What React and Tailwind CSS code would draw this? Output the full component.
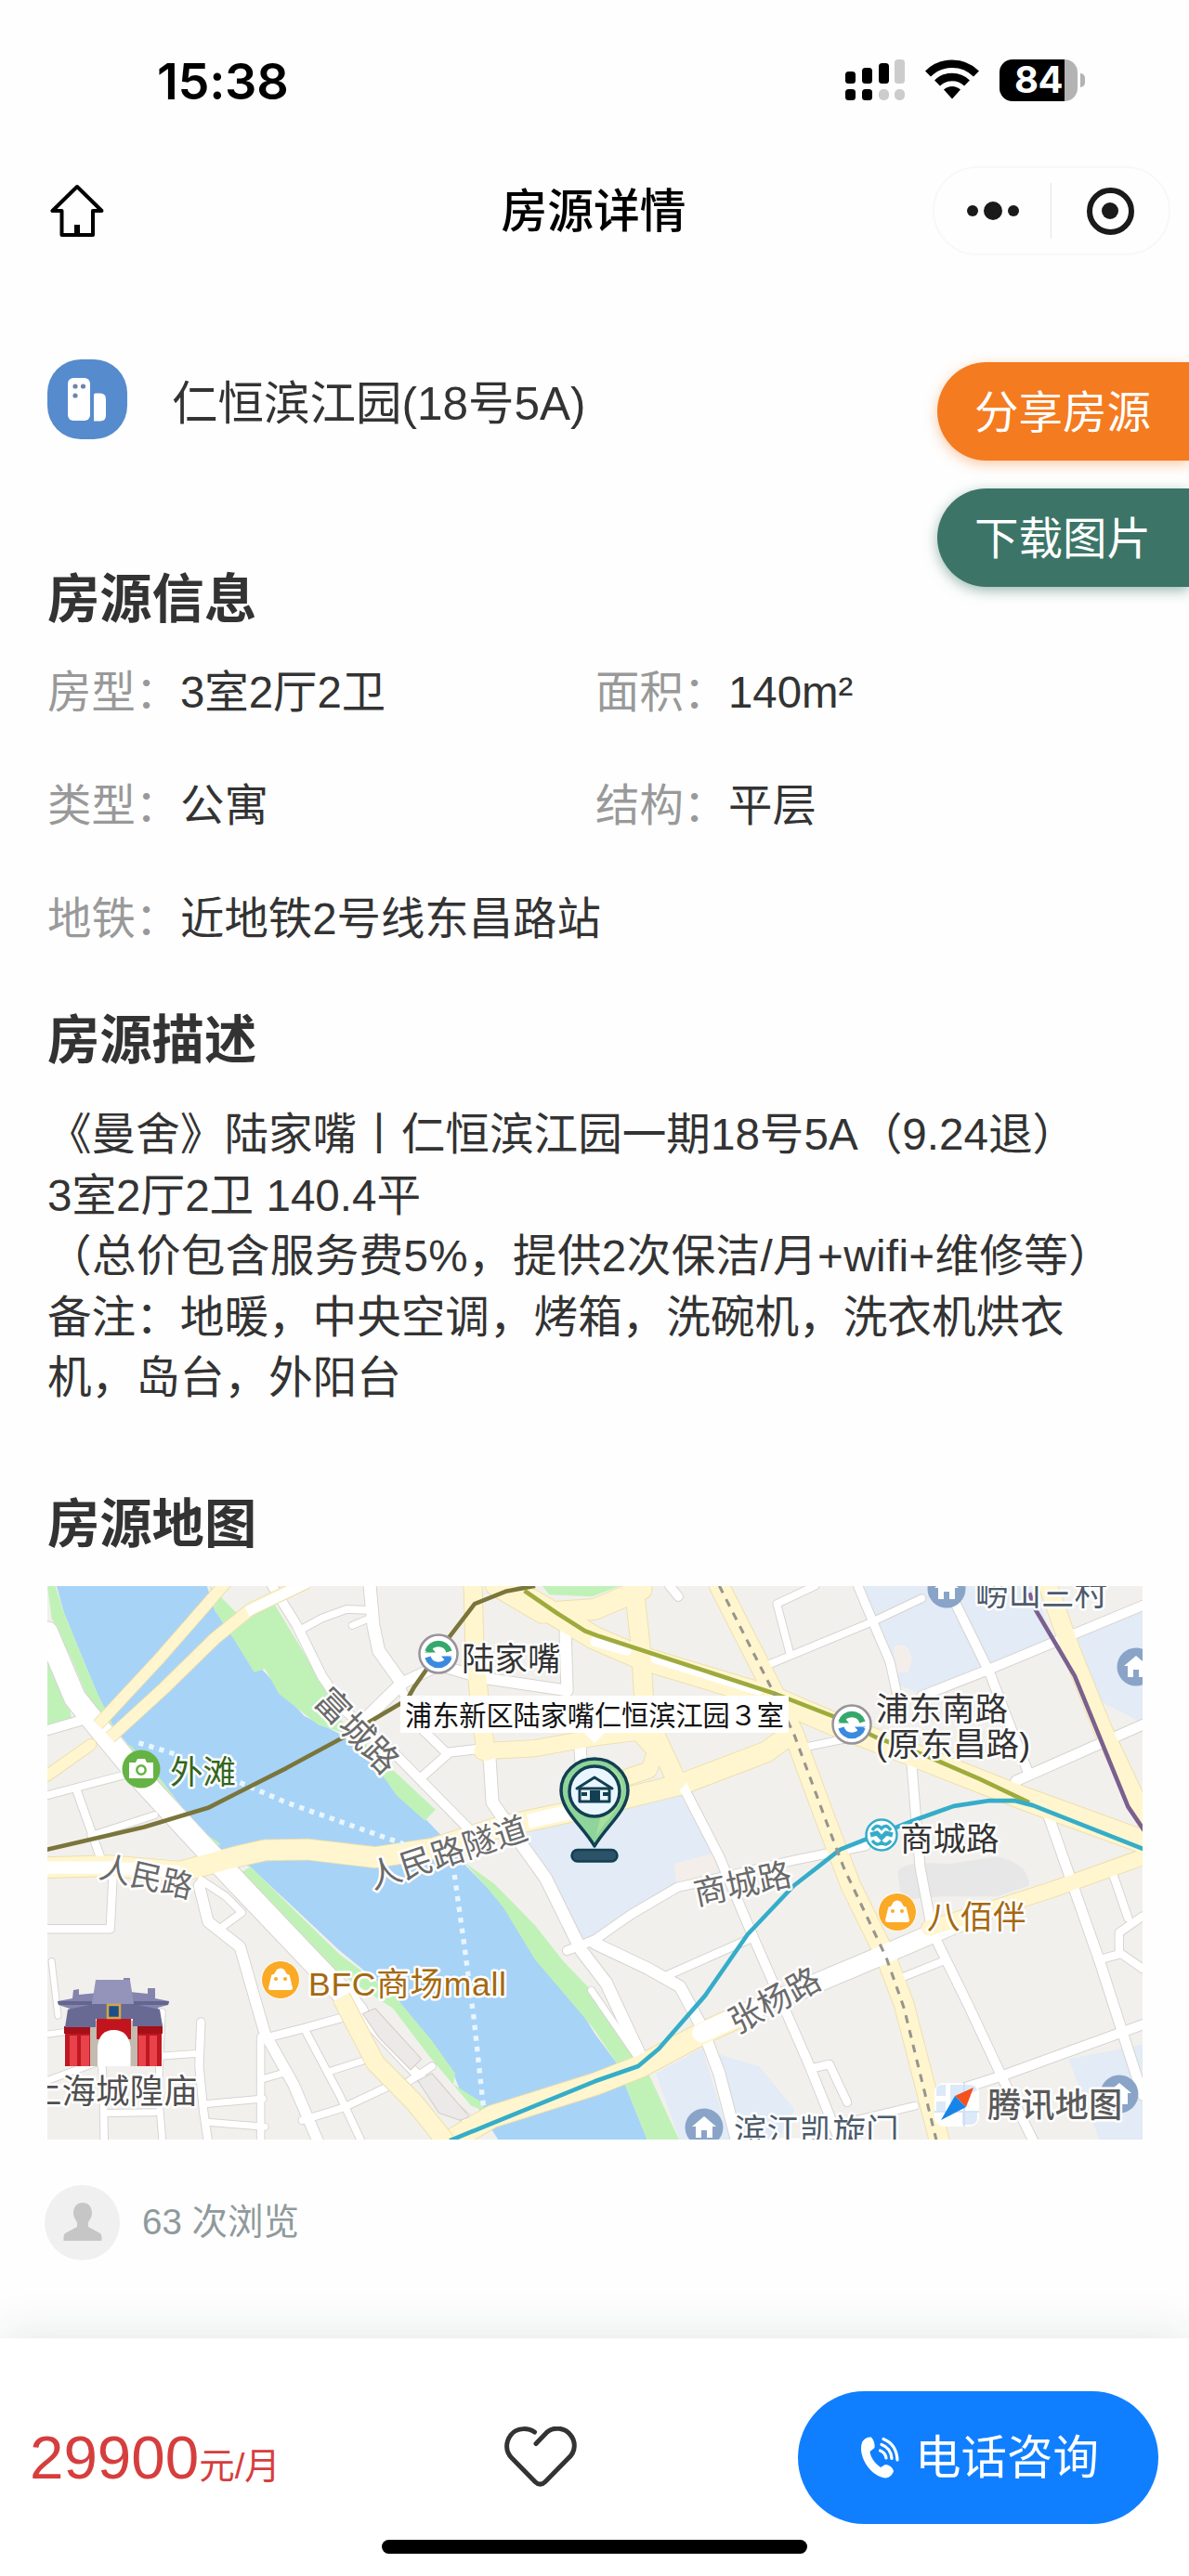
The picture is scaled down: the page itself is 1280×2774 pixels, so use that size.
import React from "react";

/* ---------- map geometry ---------- */

const W = "#ffffff";
const Y = "#fff6cf";
const GREY = "#d6d3d0";
const SAND = "#ecdfae";

// [path, width, colour]; east roads are drawn in a shifted group
const WEST_ROADS = [
  ["M28 600L240 545", 20, W],
  ["M110 585L180 780L212 830L205 970L28 970", 22, W],
  ["M150 712L330 655", 18, W],
  ["M455 850L480 950L570 1020L602 1130L640 1260L720 1400L790 1560", 30, W],
  ["M505 975L575 925L530 880L460 835", 20, W],
  ["M630 1275L750 1245L860 1215", 22, W],
  ["M628 1270V1560", 20, W],
  ["M460 1228L455 1350L468 1480L480 1560", 22, W],
  ["M350 1322L455 1315", 18, W],
  ["M28 1262L190 1240M40 1060L58 1210", 16, W],
  ["M28 1390L180 1335L340 1285", 18, W],
  ["M175 1240L185 1400L188 1560", 20, W],
  ["M350 1200L340 1420L352 1560", 18, W],
  ["M188 1480L330 1478M470 1455L635 1440M480 1505L640 1518", 18, W],
  ["M635 1385L705 1365", 18, W],
  ["M750 1245L850 1430L912 1560", 20, W],
  ["M820 1365L932 1330", 18, W],
  ["M745 1500L860 1465L1005 1398", 20, W],
  ["M902 1200L1060 1365L1235 1520", 26, W],
  ["M1040 1395L1110 1350", 20, W],
  ["M28 150L105 330L170 410L300 565L450 725L560 840L700 985L850 1140L900 1200", 60, W],
  ["M28 420L150 385", 26, W],
  ["M28 545L150 460", 30, Y],
  ["M28 800L200 795L400 812L560 770L640 752L760 750L950 772L1110 748L1300 688L1480 650L1810 570L2050 480L2120 430", 56, Y],
  ["M735 145L800 110L870 85L945 88", 20, W],
  ["M885 130L940 108", 18, W],
  ["M660 20L730 130L800 270L870 370L1010 490L1080 560L1220 700", 26, W],
  ["M935 20L945 130L960 200L1025 290L880 430", 34, W],
  ["M1025 290L1130 240L1250 275L1490 310", 30, W],
  ["M1020 300L1085 420L1150 482L1260 470M1075 555L1155 485", 24, W],
  ["M1270 470L1280 620L1350 720L1430 830L1500 970L1530 1030L1600 1120L1700 1330", 34, W],
  ["M1485 150L1490 310M1525 440L1530 520", 32, W],
  ["M1490 1030L1568 1000L1670 930L1800 855L2000 810L2128 780L2330 740", 24, W],
  ["M1290 20L1420 95L1568 85L1700 30", 56, Y],
  ["M1225 20L1230 200L1250 400L1262 480", 50, Y],
  ["M1250 478L1400 470L1568 440L1690 425L1740 480L1720 530L1600 570", 44, Y],
];

const EAST_ROADS = [
  ["M210 20L235 50", 24, W],
  ["M740 20L795 150L830 230L850 320", 24, W],
  ["M480 242L780 120L920 55", 20, W],
  ["M548 205L512 70L620 20", 20, W],
  ["M920 325L1100 255L1541 75", 26, W],
  ["M1015 70L1110 260L1220 540", 26, W],
  ["M1185 560L1541 405", 28, W],
  ["M600 465L700 445", 20, W],
  ["M890 500L915 800L950 980L1050 1180L1150 1390L1235 1560", 26, W],
  ["M1270 640L1345 850L1420 1060L1541 1430", 28, W],
  ["M1040 1410L1150 1375L1541 1235", 26, W],
  ["M850 1110L990 1055", 20, W],
  ["M1420 1055L1475 1040L1475 980L1541 935M1475 1035L1541 1080", 22, W],
  ["M1458 820L1500 940", 22, W],
  ["M615 1355L660 1345L710 1450", 22, W],
  ["M690 1510L900 1460", 20, W],
  ["M240 560L350 770L440 980L520 1160L600 1340L690 1560", 26, W],
  ["M0 1010L150 1080L240 1130L300 1240L350 1370L400 1560", 32, W],
  ["M190 1105L430 1000", 22, W],
  ["M-10 1140L130 1340", 18, W],
  ["M110 20L130 200L140 370L230 560", 52, Y],
  ["M-180 60L0 165L130 220L500 330L690 410L900 490L1210 610L1560 735", 62, Y],
  ["M170 222L460 310M0 175L90 200", 26, W],
  ["M1275 20L1340 200L1430 420L1560 690", 50, Y],
  ["M350 20L500 310L560 430L650 670L720 850L820 1050L870 1180L970 1560", 54, Y],
  ["M-420 1565L-290 1490L0 1400L130 1350L300 1260L400 1215", 60, Y],
  ["M300 1258L430 1200L780 1055L980 970L1100 920", 52, W],
  ["M940 968L1100 920L1290 860L1560 765", 42, Y],
];

const WATER =
  "M48 0L75 95L110 180L165 310L205 400L260 465L350 560L450 690L510 745L600 800L720 910L850 1030L1000 1150L1090 1260L1170 1370L1190 1420L1240 1465L1300 1560H1718L1628 1340L1568 1260L1500 1150L1390 1020L1300 890L1200 790L1130 705L870 440L750 380L640 260L590 215L500 90L470 0Z";

const GREENS = [
  "M28 20H50L75 95L110 180L165 310L215 410L190 420L150 350L90 210L40 110Z",
  "M28 225L90 360L100 400L28 430Z",
  "M240 450L265 465L350 560L450 690L516 735L490 750L380 640L300 540Z",
  "M560 820L600 798L730 925L850 1040L1000 1150L1110 1280L1175 1370L1170 1400L1250 1450L1260 1475L1220 1460L1100 1320L1000 1190L860 1100L680 970Z",
  "M485 20L560 95L660 60L740 190L800 290L860 400L1000 530L1120 640L1090 670L1010 600L960 530L870 430L790 405L680 320L640 250L610 260L560 180L500 90Z",
  "M1200 785L1285 845L1400 960L1480 1060L1568 1150L1700 1330L1808 1560H1718L1628 1340L1560 1240L1400 1055L1310 910L1260 850Z",
  "M1420 20H1640L1560 50L1440 45Z",
];

const BLUES = [
  "M1350 700L1480 680L1568 660L1798 580L1900 760L1940 850L1798 850L1660 930L1568 1000L1530 1010L1480 900Z",
  "M2310 20H2810L2850 170L2490 320L2410 290L2370 130Z",
  "M2920 150L3109 90V400L2990 340Z",
  "M1890 1310L2030 1350L2130 1470L2080 1560H1960Z",
  "M1740 1370L1870 1300L1950 1560H1808Z",
  "M2900 1330L3109 1290V1560H2990Z",
];

function Roads({ list, casing }) {
  return list.map(([d, w, c], i) => (
    <path
      key={i}
      d={d}
      fill="none"
      stroke={casing ? (c === W ? GREY : SAND) : c}
      strokeWidth={casing ? w + 5 : w}
      strokeLinejoin="round"
      strokeLinecap="round"
    />
  ));
}

function Label({ x, y, size = 35.5, color = "#3b3b3b", rotate = 0, anchor = "start", weight = 400, len, children }) {
  return (
    <text
      x={x}
      y={y}
      fontSize={size}
      fill={color}
      fontWeight={weight}
      textAnchor={anchor}
      textLength={len}
      stroke="#fff"
      strokeWidth="5"
      strokeLinejoin="round"
      paintOrder="stroke"
      transform={rotate ? `rotate(${rotate} ${x} ${y})` : undefined}
    >
      {children}
    </text>
  );
}

function MetroBadge({ x, y }) {
  return (
    <g transform={`translate(${x} ${y})`}>
      <circle r="20.5" fill="#fff" stroke="#98949a" strokeWidth="2.5" />
      <g fill="none" strokeWidth="6.5">
        <path d="M-11.5 -2.500A12 12 0 0 1 11.500 -2.500" stroke="#35a86b" />
        <path d="M11.500 3.500A12 12 0 0 1 -11.500 3.500" stroke="#3a8ae0" />
      </g>
      <path d="M-15 -5V-1H-4L-8 -7ZM15 6V2H4L8 8Z" fill="none" />
      <path d="M-15 -1.500H-3L-7 -6Z" fill="#35a86b" />
      <path d="M15 2.500H3L7 7Z" fill="#3a8ae0" />
    </g>
  );
}

function HouseBadge({ x, y }) {
  return (
    <g transform={`translate(${x} ${y})`}>
      <circle r="20.5" fill="#8aa4c8" />
      <path d="M0 -12L13 -1H9V11H3V3H-3V11H-9V-1H-13Z" fill="#fff" />
    </g>
  );
}

function MallBadge({ x, y }) {
  return (
    <g transform={`translate(${x} ${y})`}>
      <circle r="20.5" fill="#fbaa26" stroke="#fff" strokeWidth="1" />
      <path d="M-10 -4Q-10 -6 -7 -6L-4 -11Q0 -14 4 -11L7 -6Q10 -6 10 -4L13 9Q13 11 11 11H-11Q-13 11 -13 9Z" fill="#fff" />
      <circle cx="-5" cy="-1" r="2" fill="#fbaa26" />
      <circle cx="5" cy="-1" r="2" fill="#fbaa26" />
    </g>
  );
}

function TempleGate() {
  return (
    <g>
      <rect x="19" y="474" width="104" height="43" fill="#c01722" />
      <path d="M24 484h8v33h-8zM36 484h9v33h-9zM98 484h8v33h-8zM110 484h8v33h-8z" fill="#e8434a" />
      <path d="M18 474h106v8H18z" fill="#a50f18" />
      <path d="M46 468h51v49H46z" fill="#c3bab0" />
      <path d="M53 466h37v22H53z" fill="#c2141c" />
      <path d="M54 517V496Q56 478 71.500 478Q87 478 89.500 496V517Z" fill="#fff" />
      <path d="M11 447L27 444L28 435L34 434V440L54 438V424H60V428H82V422H89V437L108 439V433H116V444L131 447L130 451L119 454L124 474H92V466H52V475H20L24 455L12 451Z" fill="#8484ae" />
      <path d="M22 456L50 450H93L121 456L124 474H92V466H52V475H19Z" fill="#686a94" />
      <path d="M52 424H89L93 450H48Z" fill="#9494ba" />
      <path d="M11 447H48V451H12ZM93 447H131L130 451H93Z" fill="#65668f" />
      <rect x="65" y="451" width="13" height="14" fill="#1d4f87" stroke="#d3a64b" strokeWidth="2.5" />
    </g>
  );
}

function ListingPin() {
  return (
    <g>
      <path d="M589 280C577 259 553 242 553 220A36 34 0 0 1 625 220C625 242 601 259 589 280Z" fill="#8fd49a" stroke="#123f52" strokeWidth="3.5" strokeLinejoin="round" />
      <path d="M608 196A30 30 0 0 1 619 223C617 242 600 252 590 271Z" fill="#a9df9d" />
      <circle cx="589" cy="221" r="27" fill="#eaf6ff" stroke="#123f52" strokeWidth="3.5" />
      <path d="M570 218L589 206L608 218" fill="none" stroke="#123f52" strokeWidth="3" strokeLinecap="round" strokeLinejoin="round" />
      <path d="M573 218H605V232H573Z" fill="none" stroke="#123f52" strokeWidth="3" strokeLinejoin="round" />
      <path d="M584 220H595V232H584ZM575 222h6v4h-6zM598 222h6v4h-6z" fill="#123f52" />
      <rect x="564.5" y="284" width="49" height="12.5" rx="6.2" fill="#2b5266" stroke="#123f52" strokeWidth="2.5" />
    </g>
  );
}

function ListingMap() {
  return (
    <svg
      viewBox="0 0 1179 596"
      className="block h-[596px] w-[1179px] overflow-hidden font-['Liberation_Sans','Noto_Sans_CJK_SC',sans-serif]"
    >
      <rect width="1179" height="596" fill="#f2f0ed" />
      <g transform="scale(.3827 .389) translate(-28 -21)">
        {BLUES.map((d) => (
          <path key={d} d={d} fill="#e2ebf6" />
        ))}
        <path d="M2420 810Q2440 780 2560 790L2700 770Q2790 790 2790 850L2700 880L2540 880L2430 890Z" fill="#e8e7e8" />
        <path d="M1790 790L1900 760L1930 850L1800 860ZM2410 190q40 -20 50 30l-10 40h-40z" fill="#f4eeea" />
        <path d={WATER} fill="#a7d3f7" />
        {GREENS.map((d) => (
          <path key={d} d={d} fill="#c0f2b8" />
        ))}
        <Roads list={WEST_ROADS} casing />
        <g transform="translate(1568 0)">
          <Roads list={EAST_ROADS} casing />
        </g>
        <Roads list={WEST_ROADS} />
        <g transform="translate(1568 0)">
          <Roads list={EAST_ROADS} />
        </g>
        {/* bridges and the riverside avenue */}
        <g fill="none" strokeLinejoin="round">
          <path d="M170 405L340 225L540 0" stroke={SAND} strokeWidth="35" />
          <path d="M170 405L340 225L540 0" stroke={Y} strokeWidth="30" />
          <path d="M205 440L360 300L500 165L600 85L760 10" stroke={SAND} strokeWidth="37" />
          <path d="M205 440L360 300L500 165L600 85L760 10" stroke={Y} strokeWidth="32" />
          <path d="M590 92L760 10" stroke={W} strokeWidth="28" />
          <path d="M855 1160L950 1340L1060 1450L1150 1560" stroke={SAND} strokeWidth="55" />
          <path d="M855 1160L950 1340L1060 1450L1150 1560" stroke={Y} strokeWidth="50" />
          <path d="M28 800H200L400 812" stroke={W} strokeWidth="34" />
          <path d="M1380 672L1480 650L1568 635" stroke={W} strokeWidth="40" />
        </g>
        <path d="M915 1205L950 1190L1080 1330L1050 1360L960 1270Z M1070 1390L1110 1370L1215 1490L1190 1500L1130 1480Z" fill="#eceae8" stroke="#d8d0c8" strokeWidth="3" />
        {/* ferries */}
        <g fill="none" stroke="#e9f5ff" strokeWidth="14" strokeDasharray="14 16">
          <path d="M285 455L400 490M570 565L700 620L1030 735" />
          <path d="M1173 820L1200 1010L1228 1220L1252 1440L1256 1470" />
        </g>
        {/* metro lines */}
        <g fill="none" strokeWidth="12" strokeLinejoin="round">
          <path d="M20 752L300 688L480 635L560 595L700 525L860 440L1040 335L1060 300L1160 160L1230 70L1320 35L1400 20" stroke="#7a753a" />
          <path d="M1370 34L1460 95L1540 145L1580 160L1830 240L2078 320L2248 385L2360 440L2498 490L2650 555L2790 620" stroke="#9eab3c" />
          <path d="M1160 1556L1568 1392L1690 1350L1748 1302L1878 1155L1998 985L2128 850L2200 795L2258 750L2348 715L2478 665L2578 630L2678 615H2748L2800 628L3120 752" stroke="#35adc9" />
          <path d="M2790 40L2810 90L2918 270L3068 632L3115 700" stroke="#7a608f" />
          <path d="M1918 20L2068 310L2128 430L2218 670L2268 800L2388 1050L2438 1190L2530 1560" stroke="#98948d" strokeWidth="8" strokeDasharray="22 20" />
        </g>
      </g>

      <TempleGate />
      <HouseBadge x={968} y={3} />
      <HouseBadge x={1172} y={87} />
      <HouseBadge x={707} y={583} />
      <HouseBadge x={1154} y={547} />

      <g transform="translate(101 197)">
        <circle r="20.5" fill="#65b344" />
        <path d="M-13 -7H-6L-4 -11H4L6 -7H13V10H-13Z" fill="#fff" />
        <circle cy="1" r="4.7" fill="none" stroke="#65b344" strokeWidth="2.5" />
      </g>
      <MallBadge x={251} y={424} />
      <MallBadge x={915} y={351} />

      <Label x={-21} y={557} size={36.5} color="#4f4f4f">上海城隍庙</Label>
      <Label x={132} y={213} color="#33661f">外滩</Label>
      <Label x={281} y={441} color="#a5690f" len={213}>BFC商场mall</Label>
      <Label x={104} y={325} color="#6a6a6a" rotate={13} anchor="middle" size={34}>人民路</Label>
      <Label x={435} y={299} color="#6a6a6a" rotate={-18} anchor="middle">人民路隧道</Label>
      <Label x={324} y={165} color="#6a6a6a" rotate={46} anchor="middle" size={37}>富城路</Label>
      <Label x={446} y={91} color="#333">陆家嘴</Label>
      <Label x={892} y={145} color="#333">浦东南路</Label>
      <Label x={892} y={183} color="#333" len={166}>(原东昌路)</Label>
      <Label x={918} y={285} color="#333">商城路</Label>
      <Label x={751} y={333} color="#6a6a6a" rotate={-12} anchor="middle">商城路</Label>
      <Label x={789} y={457} color="#6a6a6a" rotate={-29} anchor="middle">张杨路</Label>
      <Label x={947} y={369} color="#a5690f">八佰伴</Label>
      <Label x={739} y={599} color="#4d5b6c">滨江凯旋门</Label>
      <Label x={999} y={21} color="#4d5b6c">崂山三村</Label>

      <MetroBadge x={421} y={73} />
      <MetroBadge x={866} y={149} />
      <g transform="translate(898 268)" fill="none" stroke="#35adc9">
        <circle r="16.5" fill="#fff" strokeWidth="2.5" />
        <path d="M-10 -5Q-5 -13 0 -7Q5 -13 10 -5" strokeWidth="3.5" />
        <path d="M-10 6Q-5 13 0 8Q5 13 10 6" strokeWidth="3.5" />
        <path d="M-12 0L-5 -2L0 3L5 -2L12 0" strokeWidth="5" />
      </g>

      <path d="M380 118H798V158H600L589 169L578 158H380Z" fill="#fff" />
      <text x="385" y="150" fontSize="29.2" fill="#111" textLength="408">浦东新区陆家嘴仁恒滨江园３室</text>
      <ListingPin />

      <g transform="translate(955 535)">
        <rect width="48" height="47" rx="10" fill="#fff" />
        <path d="M2 8Q2 2 8 2H12V14H2ZM17 2H38Q45 2 46 8L17 22ZM2 20H12V30H2ZM30 32H46V38Q46 45 38 45H30Z" fill="#dce9f8" />
        <path d="M0 31H48M32 0V47" stroke="#c9dcf3" strokeWidth="1.5" />
        <path d="M42 5L34 26L22 14Z" fill="#f4511e" />
        <path d="M7 40L22 14L34 26Z" fill="#1785e8" />
      </g>
      <Label x={1012} y={572} size={36.3} color="#5a5a5a" weight={500}>腾讯地图</Label>
    </svg>
  );
}

/* ---------- page pieces ---------- */

function StatusBar() {
  return (
    <div className="flex h-[172px] items-center justify-between pr-[112px] pl-[169px]">
      <span className="pt-[3px] font-['Inter',sans-serif] text-[54px] leading-none font-semibold tracking-[-0.3px] text-black">15:38</span>
      <div className="flex items-center">
        <svg width="66" height="46" viewBox="0 0 66 46">
          <g fill="#000">
            <rect x="1" y="14" width="11" height="13" rx="3.5" />
            <rect x="19" y="10" width="11" height="17" rx="3.5" />
            <rect x="37" y="5" width="11" height="22" rx="3.5" />
            <rect x="1" y="33" width="11" height="12" rx="3.5" />
            <rect x="19" y="33" width="11" height="12" rx="3.5" />
          </g>
          <g fill="#ccc">
            <rect x="54" y="1" width="11" height="26" rx="3.5" />
            <rect x="37" y="33" width="11" height="12" rx="5" />
            <rect x="54" y="33" width="11" height="12" rx="5" />
          </g>
        </svg>
        <svg className="ml-[21px]" width="58" height="46" viewBox="0 0 58 46">
          <g fill="none" stroke="#000" strokeWidth="8.5">
            <path d="M3 16.5A37 37 0 0 1 55 16.5" />
            <path d="M13 26.5A23 23 0 0 1 45 26.5" />
          </g>
          <path d="M20 33.5A13 13 0 0 1 38 33.5L29 43.5Z" />
        </svg>
        <div className="ml-[22px] flex items-center">
          <div className="flex h-[45px] w-[84px] items-center rounded-[14px] bg-[linear-gradient(to_right,#000_70px,#b3b3b3_70px)]">
            <span className="pl-[16px] font-['Inter',sans-serif] text-[40px] leading-none font-bold tracking-[-0.5px] text-white">84</span>
          </div>
          <div className="ml-[3px] h-[15px] w-[5px] rounded-r-full bg-[#b3b3b3]" />
        </div>
      </div>
    </div>
  );
}

function NavBar() {
  return (
    <div className="grid h-[110px] grid-cols-[1fr_auto_1fr] items-center pr-[20px] pl-[54px]">
      <svg width="58" height="58" viewBox="0 0 58 58" className="block">
        <path d="M29 3L2.500 29H12.500V55H46V29H55.500Z" fill="none" stroke="#000" strokeWidth="4" strokeLinejoin="round" />
        <path d="M26 44H32V55H26Z" />
      </svg>
      <h1 className="-translate-x-[18px] pt-[3px] text-[49.800px] leading-none font-medium text-black">房源详情</h1>
      <div className="flex h-[96px] w-[256px] items-center justify-self-end rounded-full border-2 border-[#f8f8f8]">
        <div className="flex h-full w-[125px] items-center justify-center gap-[6px]">
          <i className="size-[12px] rounded-full bg-[#1a1a1a]" />
          <i className="size-[20px] rounded-full bg-[#1a1a1a]" />
          <i className="size-[12px] rounded-full bg-[#1a1a1a]" />
        </div>
        <div className="h-[60px] w-px bg-[#e4e4e4]" />
        <div className="flex h-full flex-1 items-center justify-center">
          <div className="flex size-[51px] items-center justify-center rounded-full border-[6px] border-[#1a1a1a]">
            <i className="size-[18px] rounded-full bg-[#1a1a1a]" />
          </div>
        </div>
      </div>
    </div>
  );
}

function BuildingIcon() {
  return (
    <svg width="86" height="86" viewBox="0 0 86 86" className="block">
      <rect width="86" height="86" rx="36" fill="#568bcd" />
      <rect x="22" y="20" width="24" height="46" rx="6" fill="#fff" />
      <path d="M50 38Q50 36.500 52 36.500H57Q63 36.500 63 43V60Q63 66.500 57 66.500H50Z" fill="#fff" />
      <g fill="#7183a8">
        <circle cx="30" cy="29" r="2.600" />
        <circle cx="38.500" cy="29" r="2.600" />
        <circle cx="30" cy="39" r="2.600" />
      </g>
    </svg>
  );
}

function Heading({ children }) {
  return <h2 className="h-[60px] text-[56.300px] leading-[61px] font-bold text-[#333]">{children}</h2>;
}

function Field({ label, value, wide }) {
  return (
    <div className={wide ? "col-span-2 flex" : "flex"}>
      <dt className="w-[143px] text-[#999]">{label}：</dt>
      <dd>{value}</dd>
    </div>
  );
}

const FIELDS = [
  ["房型", "3室2厅2卫"],
  ["面积", "140m²"],
  ["类型", "公寓"],
  ["结构", "平层"],
  ["地铁", "近地铁2号线东昌路站"],
];

const DESCRIPTION = [
  ["《曼舍》陆家嘴丨仁恒滨江园一期18号5A（9.24退）", ""],
  ["3室2厅2卫 140.4平", ""],
  ["（总价包含服务费5%，提供2次保洁/月+wifi+维修等）", "tracking-[0.35px]"],
  ["备注：地暖，中央空调，烤箱，洗碗机，洗衣机烘衣", ""],
  ["机，岛台，外阳台", ""],
];

export default function App() {
  return (
    <div className="relative flex h-[2774px] w-[1280px] flex-col overflow-hidden bg-[#fefefe] font-['Liberation_Sans','Noto_Sans_CJK_SC',sans-serif] text-[#333] [text-spacing-trim:space-all]">
      <StatusBar />
      <NavBar />

      <div className="absolute top-[390px] right-0 flex w-[271px] flex-col gap-[30px] text-[47.500px] text-white">
        <button className="h-[106px] rounded-l-full bg-[#f47b20] pl-[40px] text-left leading-[110px] shadow-[0_4px_14px_rgba(244,123,32,0.4)]">分享房源</button>
        <button className="h-[106px] rounded-l-full bg-[#3c7567] pl-[40px] text-left leading-[110px] shadow-[0_4px_14px_rgba(60,117,103,0.5)]">下载图片</button>
      </div>

      <main className="flex flex-col pt-[105px] pl-[51px]">
        <div className="flex h-[86px] items-center gap-[48px]">
          <BuildingIcon />
          <span className="pt-[9px] text-[49.500px] leading-none">仁恒滨江园(18号5A)</span>
        </div>

        <section className="pt-[142px]">
          <Heading>房源信息</Heading>
          <dl className="grid w-[1180px] grid-cols-2 pt-[10px] text-[47.400px] leading-[122px]">
            {FIELDS.map(([label, value], i) => (
              <Field key={label} label={label} value={value} wide={i === 4} />
            ))}
          </dl>
        </section>

        <section className="pt-[39px]">
          <Heading>房源描述</Heading>
          <div className="pt-[39px] text-[47.600px] leading-[65.500px] whitespace-nowrap">
            {DESCRIPTION.map(([line, tracking]) => (
              <p key={line} className={tracking}>{line}</p>
            ))}
          </div>
        </section>

        <section className="pt-[94px]">
          <Heading>房源地图</Heading>
          <div className="pt-[37px]">
            <ListingMap />
          </div>
        </section>

        <div className="flex items-center gap-[24px] pt-[49px]">
          <div className="-ml-[3px] flex size-[81px] items-center justify-center rounded-full bg-[#f0f0f0]">
            <svg width="42" height="42" viewBox="0 0 42 42">
              <path d="M21 0C27 0 31 4.500 31 11C31 16 28.500 18 27 21V26L40 33Q42 35 41.500 41H0.500Q0 35 2 33L15 26V21C13.500 18 11 16 11 11C11 4.500 15 0 21 0Z" fill="#c6c6c6" />
            </svg>
          </div>
          <span className="text-[38.500px] leading-none text-[#8f9a9c]">63 次浏览</span>
        </div>
      </main>

      <footer className="absolute bottom-0 left-0 flex h-[256px] w-full flex-col items-center bg-white shadow-[0_0_50px_rgba(20,50,45,0.13)]">
        <div className="flex h-[217px] w-full items-center pt-[39px] pr-[33px] pl-[32px]">
          <div className="flex w-[511px] items-baseline pt-[2px] text-[#d63e3e]">
            <span className="text-[65.500px] leading-none">29900</span>
            <span className="text-[38.500px] leading-none">元/月</span>
          </div>
          <svg width="78" height="66" viewBox="0 0 78 66" className="block">
            <path d="M32.500 6C27 2 14 0 7 9C1 17 1 27 8 34L33 59.500Q38.500 65 44 59.500L69 34C77 27 77 16 71 9C65 1 53 0 46 6L34 18.500" fill="none" stroke="#333" strokeWidth="5" strokeLinecap="round" strokeLinejoin="round" />
          </svg>
          <button className="ml-auto flex h-[143px] w-[388px] items-center rounded-full bg-[#107fff] pl-[68px] text-[49.500px] text-white">
            <svg width="42" height="45" viewBox="0 0 42 45" className="block">
              <path d="M1 6C3 2 7 0 11 0.500C14 4 15 8 14.500 12L9.500 16C10 22 15 29 21 33L26 30C30 30 34 33 35 37C34 41 30 44.500 26 44.500C13 43 1 28 0 14Q0 9 1 6Z" fill="#fff" />
              <g fill="none" stroke="#fff" strokeWidth="3.200" strokeLinecap="round">
                <path d="M20.500 15Q26 17 27 23" />
                <path d="M22 8.500Q32 12 33 23.500" />
                <path d="M24 2.500Q38 8 39 25" />
              </g>
            </svg>
            <span className="ml-[16px] pt-[2px] leading-none">电话咨询</span>
          </button>
        </div>
        <div className="h-[15px] w-[458px] rounded-full bg-black" />
      </footer>
    </div>
  );
}
